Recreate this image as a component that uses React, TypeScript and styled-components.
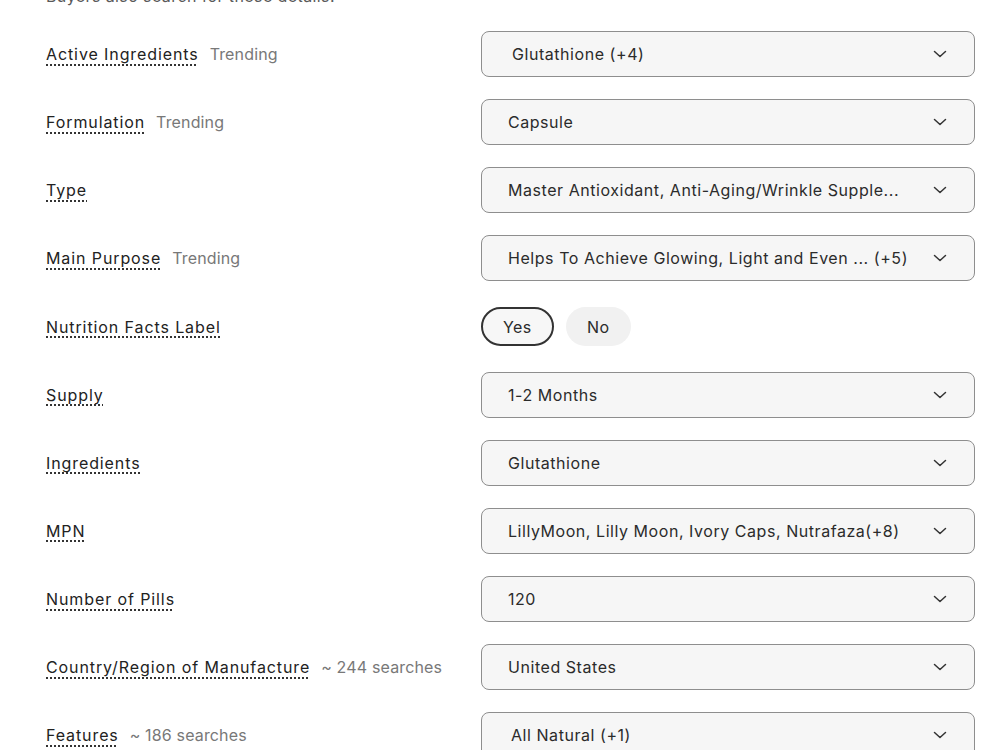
import React, { useState } from 'react';
import styled, { createGlobalStyle } from 'styled-components';

const GlobalStyle = createGlobalStyle`
  html, body {
    margin: 0;
    padding: 0;
    background: #ffffff;
  }
  body {
    font-family: 'Inter', 'Liberation Sans', Arial, sans-serif;
    color: #222222;
    overflow: hidden;
  }
`;

const Page = styled.div`
  width: 1000px;
  height: 750px;
  overflow: hidden;
  padding: 0 25px 0 46px;
  box-sizing: border-box;
`;

const Caption = styled.p`
  margin: -14px 0 0;
  height: 20px;
  font-size: 16px;
  line-height: 20px;
  letter-spacing: 0.4px;
  color: #595959;
`;

const List = styled.div`
  display: flex;
  flex-direction: column;
  gap: 22.15px;
  margin-top: 25px;
`;

const Row = styled.div`
  display: grid;
  grid-template-columns: 435px 1fr;
  align-items: center;
  min-height: 46px;
`;

const LabelWrap = styled.div`
  display: flex;
  align-items: baseline;
  gap: 11px;
  font-size: 16px;
`;

const Label = styled.span`
  color: #222222;
  letter-spacing: 0.9px;
  text-decoration: underline dotted #333333;
  text-decoration-thickness: 1.5px;
  text-underline-offset: 4px;
`;

const Hint = styled.span`
  color: #787878;
  letter-spacing: 0.15px;
`;

const Select = styled.button<{ $indent?: number }>`
  display: flex;
  align-items: center;
  justify-content: space-between;
  height: 46px;
  padding: 0 26px 0 ${p => p.$indent ?? 26}px;
  border: 1px solid #8e8e8e;
  border-radius: 8px;
  background: #f6f6f6;
  font: inherit;
  font-size: 16px;
  color: #2b2b2b;
  text-align: left;
  box-sizing: border-box;
  width: 100%;
  cursor: pointer;
`;

const SelectText = styled.span`
  white-space: nowrap;
  overflow: hidden;
  letter-spacing: 0.55px;
`;

const Chevron = styled.svg`
  flex: none;
  width: 16px;
  height: 16px;
  margin-left: 16px;
`;

const Pills = styled.div`
  display: flex;
  gap: 12px;
`;

const Pill = styled.button<{ $active?: boolean }>`
  height: 39px;
  padding: 0 ${p => (p.$active ? 20 : 19.5)}px;
  border-radius: 20px;
  border: ${p => (p.$active ? '2px solid #333333' : '2px solid transparent')};
  background: ${p => (p.$active ? '#f7f7f7' : '#f1f1f1')};
  font: inherit;
  font-size: 16px;
  letter-spacing: 0.4px;
  color: #2b2b2b;
  cursor: pointer;
`;

type Field = {
  label: string;
  hint?: string;
  value?: string;
  indent?: number;
  toggle?: boolean;
};

const fields: Field[] = [
  { label: 'Active Ingredients', hint: 'Trending', value: 'Glutathione (+4)', indent: 30 },
  { label: 'Formulation', hint: 'Trending', value: 'Capsule' },
  { label: 'Type', value: 'Master Antioxidant, Anti-Aging/Wrinkle Supple...' },
  { label: 'Main Purpose', hint: 'Trending', value: 'Helps To Achieve Glowing, Light and Even ...  (+5)' },
  { label: 'Nutrition Facts Label', toggle: true },
  { label: 'Supply', value: '1-2 Months' },
  { label: 'Ingredients', value: 'Glutathione' },
  { label: 'MPN', value: 'LillyMoon, Lilly Moon, Ivory Caps, Nutrafaza(+8)' },
  { label: 'Number of Pills', value: '120' },
  { label: 'Country/Region of Manufacture', hint: '~ 244 searches', value: 'United States' },
  { label: 'Features', hint: '~ 186 searches', value: 'All Natural (+1)', indent: 29 },
];

const ChevronIcon = () => (
  <Chevron viewBox="0 0 16 16" fill="none">
    <path d="M2.5 5.5L8 10.5L13.5 5.5" stroke="#333" strokeWidth="1.5" strokeLinecap="round" strokeLinejoin="round" />
  </Chevron>
);

export default function App() {
  const [facts, setFacts] = useState<'yes' | 'no'>('yes');

  return (
    <>
      <GlobalStyle />
      <Page>
        <Caption>Buyers also search for these details.</Caption>
        <List>
          {fields.map(f => (
            <Row key={f.label}>
              <LabelWrap>
                <Label>{f.label}</Label>
                {f.hint && <Hint>{f.hint}</Hint>}
              </LabelWrap>
              {f.toggle ? (
                <Pills>
                  <Pill $active={facts === 'yes'} onClick={() => setFacts('yes')}>Yes</Pill>
                  <Pill $active={facts === 'no'} onClick={() => setFacts('no')}>No</Pill>
                </Pills>
              ) : (
                <Select $indent={f.indent}>
                  <SelectText>{f.value}</SelectText>
                  <ChevronIcon />
                </Select>
              )}
            </Row>
          ))}
        </List>
      </Page>
    </>
  );
}
